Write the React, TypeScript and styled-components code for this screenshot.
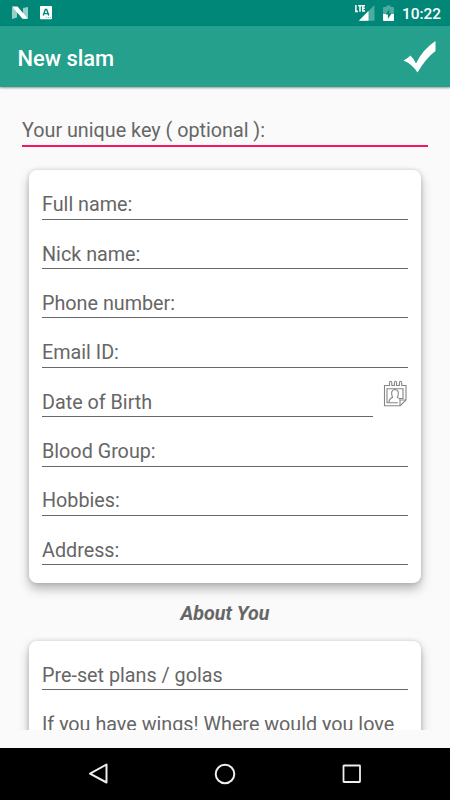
import React from "react";
import styled, { createGlobalStyle } from "styled-components";

const GlobalStyle = createGlobalStyle`
  * { box-sizing: border-box; }
  body { margin: 0; background: #fafafa; font-family: Roboto, sans-serif; }
`;

const Screen = styled.div`
  display: flex;
  flex-direction: column;
  width: 450px;
  height: 800px;
  overflow: hidden;
  background: #fafafa;
`;

const StatusBar = styled.header`
  display: flex;
  align-items: center;
  justify-content: space-between;
  flex: none;
  height: 26px;
  padding: 0 9px 0 12px;
  background: #018778;
  color: #fff;
`;

const StatusGroup = styled.div<{ $gap: number }>`
  display: flex;
  align-items: center;
  gap: ${(p) => p.$gap}px;
  height: 26px;
`;

const Clock = styled.span`
  margin-left: -1px;
  font-size: 15.4px;
  font-weight: 500;
  line-height: 26px;
  padding-top: 2px;
`;

const Toolbar = styled.div`
  display: flex;
  align-items: center;
  justify-content: space-between;
  flex: none;
  height: 61px;
  padding: 0 13px 0 17.5px;
  background: #24a08c;
  box-shadow: 0 1px 2px rgba(0, 0, 0, 0.4);
`;

const Title = styled.h1`
  margin: 0;
  padding-top: 4px;
  color: #fff;
  font-size: 21.9px;
  font-weight: 500;
  line-height: 26px;
`;

const Form = styled.main`
  flex: none;
  height: 643px;
  padding: 0 18px;
  overflow: hidden;
`;

const KeyField = styled.div`
  height: 60px;
  margin: 0 4px;
  padding-top: 32px;
  border-bottom: 2px solid #f31667;
  color: #666;
  font-size: 19.75px;
  line-height: 24px;
`;

const Scroller = styled.div`
  height: 583px;
  padding: 23.3px 11px 0;
  overflow: hidden;
`;

const Card = styled.section`
  height: 412.7px;
  padding: 0 13px;
  border-radius: 8px;
  background: #fff;
  box-shadow: 0 6px 11px rgba(0, 0, 0, 0.27), 0 0 4px rgba(0, 0, 0, 0.16);
`;

const Row = styled.div`
  display: flex;
  gap: 9px;
  height: 49.375px;
`;

const Field = styled.div`
  flex: 1;
  height: 49.375px;
  padding-top: 22.95px;
  border-bottom: 1px solid #686868;
  color: #666;
  font-size: 19.75px;
  line-height: 24px;
  white-space: nowrap;
`;

const DateButton = styled.div`
  width: 26px;
  padding: 12px 0 0 0.5px;
`;

const SectionTitle = styled.h2`
  height: 58px;
  margin: 0;
  padding-top: 19px;
  color: #666;
  font-size: 19.69px;
  font-style: italic;
  font-weight: 700;
  line-height: 24px;
  text-align: center;
`;

const Spacer = styled.div`
  flex: 1;
`;

const NavBar = styled.nav`
  display: grid;
  grid-template-columns: repeat(3, 126.5px);
  justify-content: center;
  justify-items: center;
  align-items: center;
  flex: none;
  height: 52.5px;
  background: #000;
`;

const fields = ["Full name:", "Nick name:", "Phone number:", "Email ID:", "Date of Birth", "Blood Group:", "Hobbies:", "Address:"];

const NougatIcon = () => (
  <svg width="16" height="14" viewBox="0 0 16 14">
    <path d="M0 1.5 5 1v10.5L0 13zM11 2l5-1v11l-5 1z" fill="#fff" opacity=".6" />
    <path d="M0 .5h5.5L16 12.7h-5.5z" fill="#fff" />
  </svg>
);

const KeyboardIcon = () => (
  <svg width="12" height="14" viewBox="0 0 12 14">
    <rect width="12" height="13.3" rx="1" fill="#fff" />
    <path d="m3.2 9.5 2.1-6h1.4l2.1 6M4.2 7.6h3.6" fill="none" stroke="#018778" strokeWidth="1.4" />
    <path d="M6 11.5h1m1 0h1m1 0h1" stroke="#80c3bb" />
  </svg>
);

const SignalIcon = () => (
  <svg width="20" height="18" viewBox="0 0 20 18">
    <path d="M19.5 1v15.7H3.8z" fill="#fff" opacity=".3" />
    <path d="M13.5 7v9.7H3.8z" fill="#fff" />
    <path d="M.9 1v6.4H3M3.2 1.8h3.6M5 1.8v5.9M10 1.8H7.8v5.1H10M7.8 4.3h2" fill="none" stroke="#fff" strokeWidth="1.5" />
  </svg>
);

const BatteryIcon = () => (
  <svg width="11" height="17" viewBox="0 0 11 17">
    <path d="M0 3q0-1 1-1h2.5V.5h4V2H10q1 0 1 1v6H0z" fill="#fff" opacity=".3" />
    <path d="M0 9h11v6q0 1-1 1H1q-1 0-1-1z" fill="#fff" />
    <path d="M6.3 4 2.7 9.6h2.2V14L8.5 8.4H6.3z" fill="#018778" />
  </svg>
);

const CheckIcon = () => (
  <svg width="34" height="34" viewBox="0 0 34 34">
    <path d="M.5 20.5q4.5-2.5 7-5 3.5 3.5 5.5 8Q20 9 32.5 1v10Q23 18 14.5 32.5 9 24 .5 20.5z" fill="#fff" />
  </svg>
);

const CalendarIcon = () => (
  <svg width="24" height="27" viewBox="0 0 24 27" fill="none" stroke="#858585" strokeWidth="1.1">
    <path d="M1.5 5.5h5V3q0-1.7 1.1-1.7T8.8 3v2.5h2.6V3q0-1.7 1.1-1.7T13.6 3v2.5h2.8V3q0-1.7 1.1-1.7T18.7 3v2.5h4.3V20l-5.8 5.7H1.5z" />
    <path d="M17 25.5V20h5.7M15 22.7H4v-14h16v9.8h-4" />
    <path d="M6 22.5q0-3.8 3.5-5-2.7-7.5 2.5-8 5.2.5 2.5 8 2 .5 2.5 2" />
  </svg>
);

export default function App() {
  return (
    <Screen>
      <GlobalStyle />
      <StatusBar>
        <StatusGroup $gap={12}>
          <NougatIcon />
          <KeyboardIcon />
        </StatusGroup>
        <StatusGroup $gap={8.5}>
          <SignalIcon />
          <BatteryIcon />
          <Clock>10:22</Clock>
        </StatusGroup>
      </StatusBar>
      <Toolbar>
        <Title>New slam</Title>
        <CheckIcon />
      </Toolbar>
      <Form>
        <KeyField>Your unique key ( optional ):</KeyField>
        <Scroller>
          <Card>
            {fields.map((label) => (
              <Row key={label}>
                <Field>{label}</Field>
                {label === "Date of Birth" && (
                  <DateButton>
                    <CalendarIcon />
                  </DateButton>
                )}
              </Row>
            ))}
          </Card>
          <SectionTitle>About You</SectionTitle>
          <Card>
            <Field>Pre-set plans / golas</Field>
            <Field>If you have wings! Where would you love</Field>
          </Card>
        </Scroller>
      </Form>
      <Spacer />
      <NavBar>
        <svg width="22" height="22" viewBox="0 0 22 22">
          <path d="M18.5 1.5v18L2 10.7z" fill="none" stroke="#eee" strokeWidth="2" strokeLinejoin="round" />
        </svg>
        <svg width="22" height="22" viewBox="0 0 22 22">
          <circle cx="11" cy="11" r="9.3" fill="none" stroke="#eee" strokeWidth="2" />
        </svg>
        <svg width="22" height="22" viewBox="0 0 22 22">
          <rect x="2.5" y="2.5" width="16.5" height="16.5" rx=".5" fill="none" stroke="#eee" strokeWidth="1.8" />
        </svg>
      </NavBar>
    </Screen>
  );
}
